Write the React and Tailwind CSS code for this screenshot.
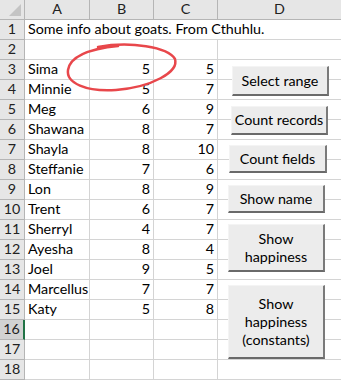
import React from 'react';

const cols = ['A', 'B', 'C', 'D'];

const goats = [
  ['Sima', 5, 5],
  ['Minnie', 5, 7],
  ['Meg', 6, 9],
  ['Shawana', 8, 7],
  ['Shayla', 8, 10],
  ['Steffanie', 7, 6],
  ['Lon', 8, 9],
  ['Trent', 6, 7],
  ['Sherryl', 4, 7],
  ['Ayesha', 8, 4],
  ['Joel', 9, 5],
  ['Marcellus', 7, 7],
  ['Katy', 5, 8],
];

const buttons = [
  { label: 'Select range', box: 'left-[232px] top-[66px] w-[97px] h-[30px]' },
  { label: 'Count records', box: 'left-[231px] top-[106px] w-[97px] h-[29px]' },
  { label: 'Count fields', box: 'left-[229px] top-[145px] w-[98px] h-[28px]' },
  { label: 'Show name', box: 'left-[228px] top-[185px] w-[97px] h-[28px]' },
  { label: 'Show\nhappiness', box: 'left-[228px] top-[224px] w-[97px] h-[48px]' },
  { label: 'Show\nhappiness\n(constants)', box: 'left-[228px] top-[285px] w-[97px] h-[74px]' },
];

const RowHead = ({ n, active }) => (
  <div
    className={`flex items-center justify-center border-b border-r ${
      active ? 'bg-[#d2d2d2] border-r-[#217346] border-r-2 border-b-[#b5b5b5]' : 'bg-[#e6e6e6] border-[#b5b5b5]'
    } text-[#222]`}
  >
    {n}
  </div>
);

const Cell = ({ children, right, className = '' }) => (
  <div
    className={`flex items-center border-b border-r border-[#d4d4d4] bg-white px-[3px] whitespace-nowrap ${
      right ? 'justify-end' : ''
    } ${className}`}
  >
    {children}
  </div>
);

export default function App() {
  const rows = [];
  for (let r = 2; r <= 18; r++) {
    const g = goats[r - 3];
    rows.push(
      <React.Fragment key={r}>
        <RowHead n={r} active={r === 16} />
        <Cell>{g ? g[0] : ''}</Cell>
        <Cell right>{g ? g[1] : ''}</Cell>
        <Cell right>{g ? g[2] : ''}</Cell>
        <Cell className="border-r-0" />
      </React.Fragment>
    );
  }

  return (
    <div className="relative w-[341px] h-[380px] overflow-hidden bg-white text-[14.3px] leading-none text-black font-['Lato',sans-serif]">
      <div className="grid grid-cols-[25px_65px_64px_64px_1fr] grid-rows-[repeat(19,20px)]">
        {/* corner */}
        <div className="relative bg-[#e6e6e6] border-b border-r border-[#b5b5b5]">
          <div className="absolute right-[3px] bottom-[3px] w-0 h-0 border-l-[12px] border-l-transparent border-b-[12px] border-b-[#c4c4c4]" />
        </div>
        {cols.map((c, i) => (
          <div
            key={c}
            className={`flex items-center justify-center bg-[#e6e6e6] border-b border-[#b5b5b5] text-[#222] ${
              i < 3 ? 'border-r' : ''
            }`}
          >
            {c}
          </div>
        ))}

        {/* row 1 spills over the whole sheet */}
        <RowHead n={1} />
        <div className="col-span-4 flex items-center border-b border-[#d4d4d4] px-[3px] whitespace-nowrap">
          Some info about goats. From Cthuhlu.
        </div>

        {rows}
      </div>

      {/* red hand-drawn circle around B3 */}
      <svg className="absolute left-0 top-0 pointer-events-none" width="341" height="380">
        <path
          d="M98 47 C130 41, 168 47, 175 59 C179 72, 152 87, 116 90 C86 92, 66 83, 68 70 C70 57, 88 49, 118 46"
          fill="none"
          stroke="#e8474b"
          strokeWidth="2.5"
          strokeLinecap="round"
        />
      </svg>

      {buttons.map((b) => (
        <button
          key={b.label}
          className={`absolute ${b.box} flex items-center justify-center whitespace-pre-line text-center leading-[18px] bg-[#ececec] border-t border-l border-[#f4f4f4] border-r-2 border-b-2 border-r-[#7a7a7a] border-b-[#6a6a6a] text-black`}
        >
          {b.label}
        </button>
      ))}
    </div>
  );
}
